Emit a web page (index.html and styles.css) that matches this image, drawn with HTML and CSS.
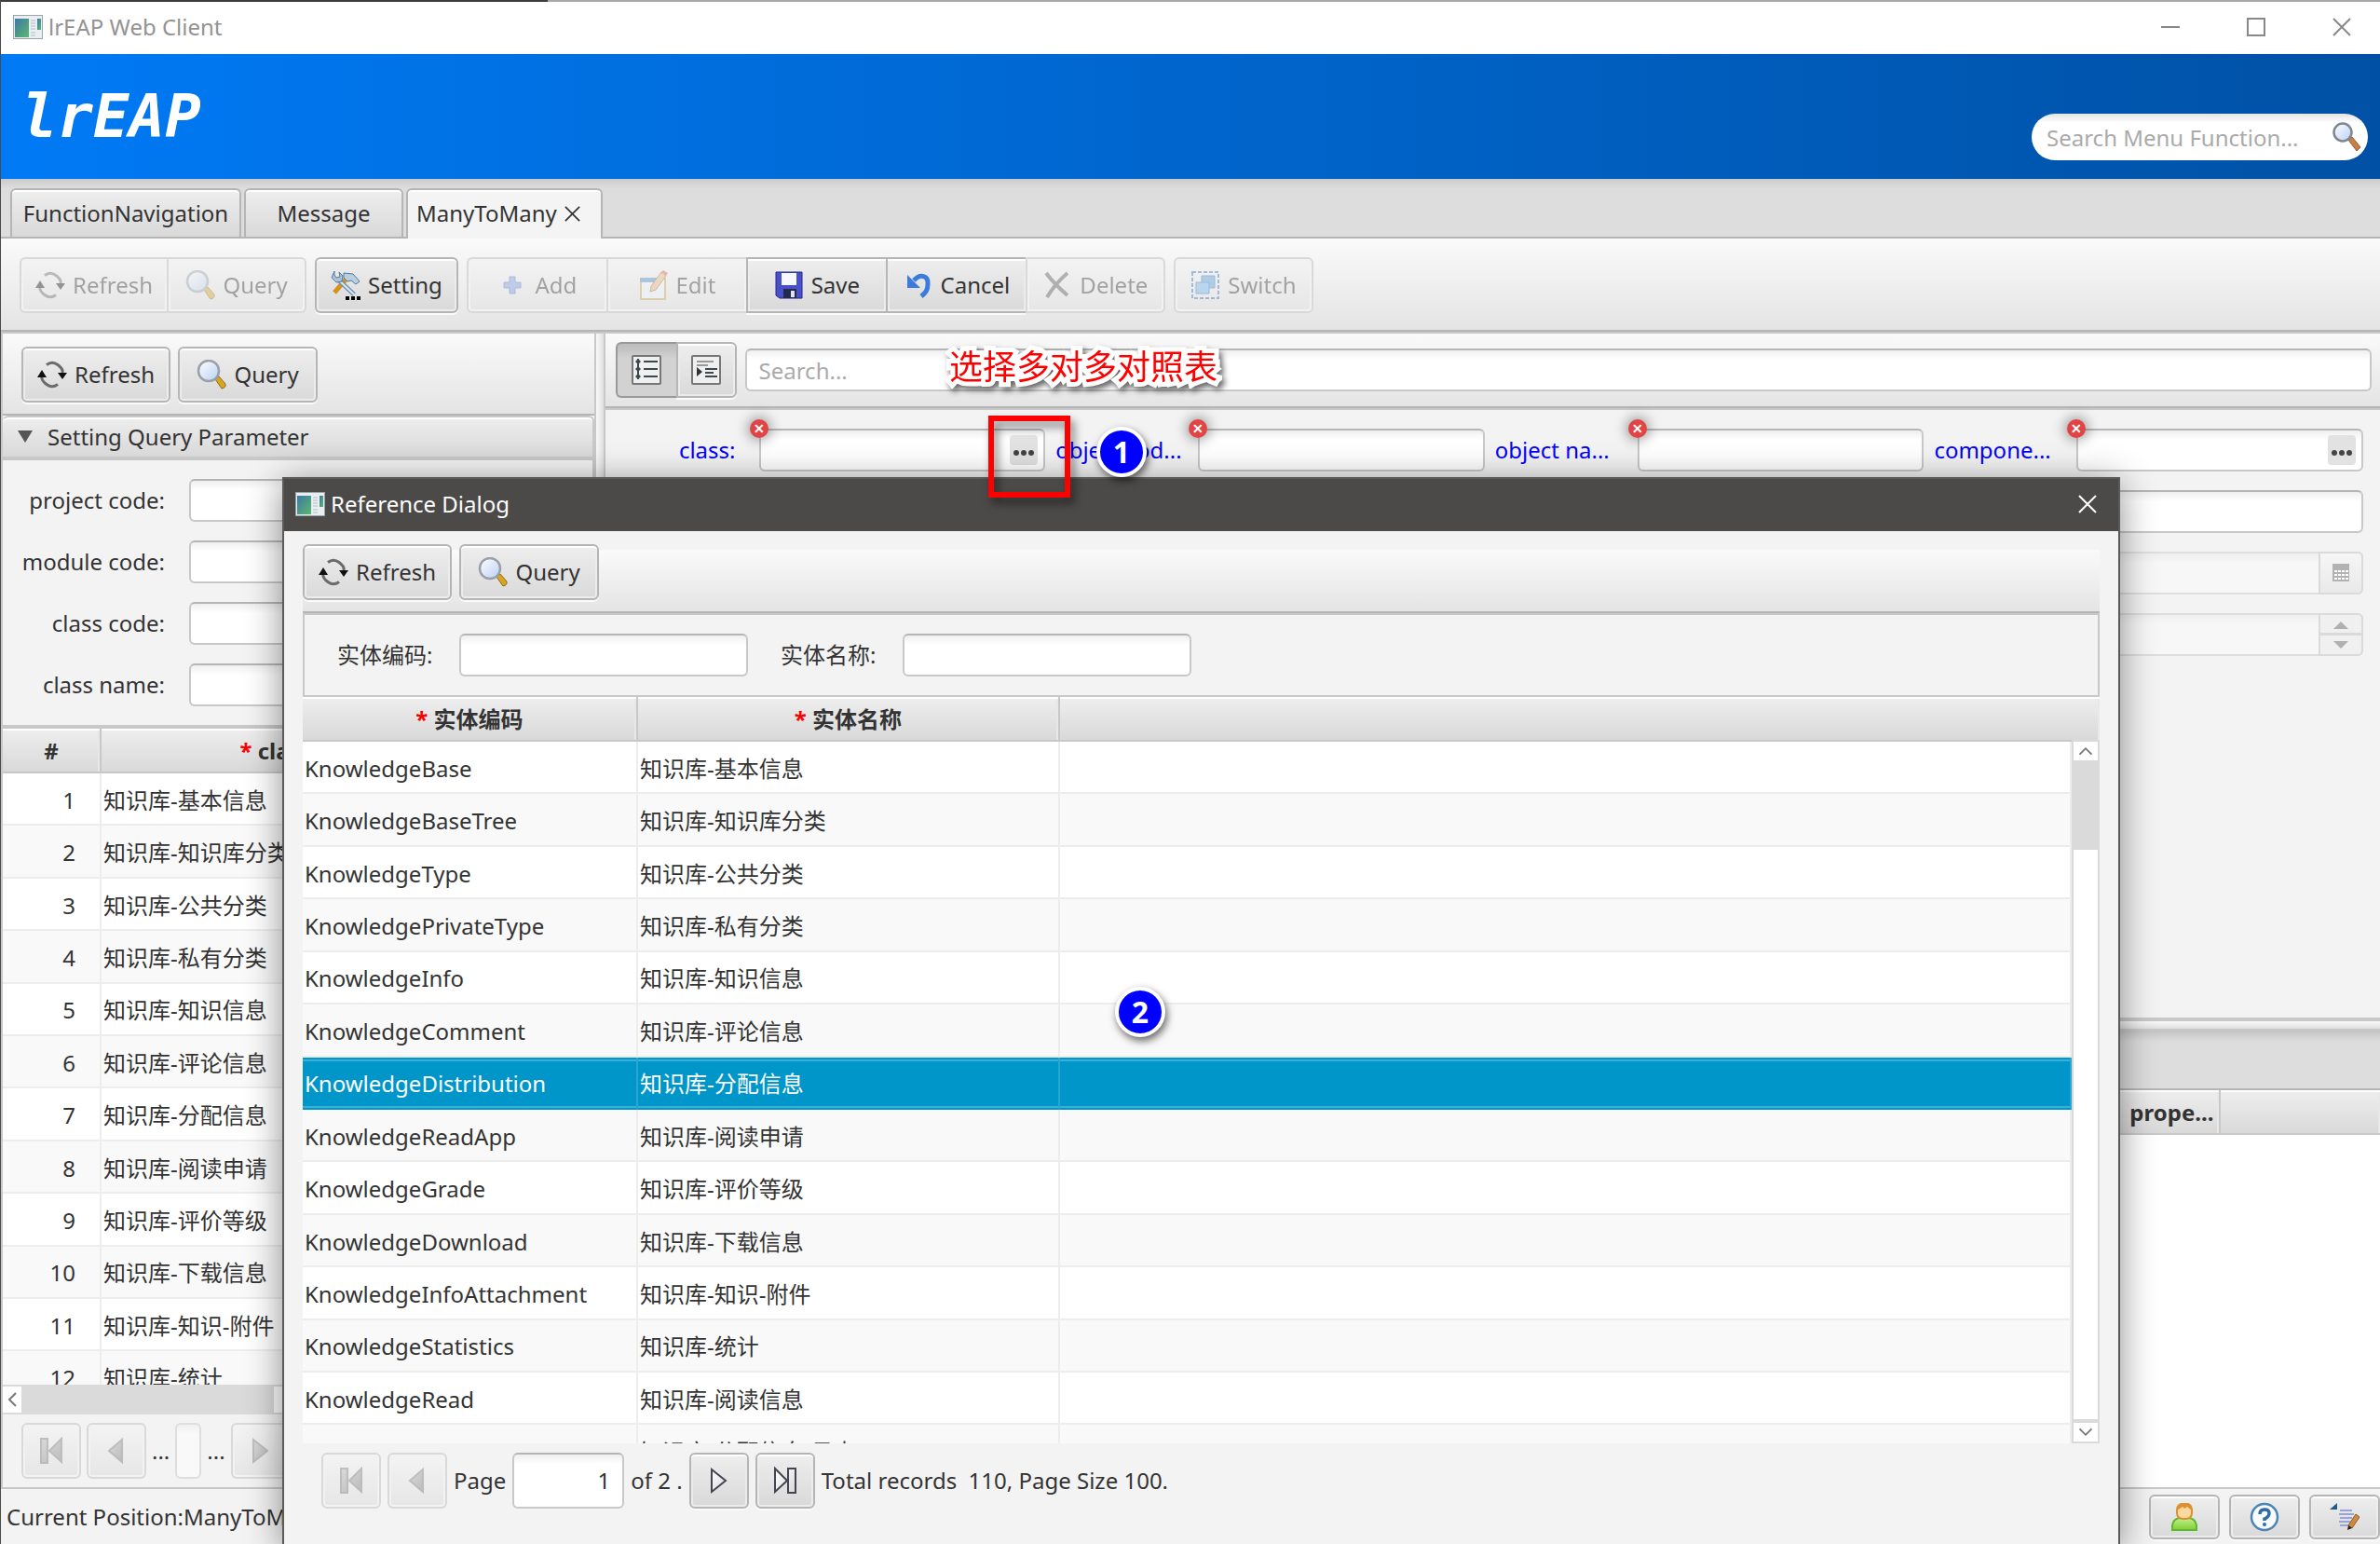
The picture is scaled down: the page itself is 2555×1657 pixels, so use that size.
FILE: index.html
```html
<!DOCTYPE html>
<html lang="en">
<head>
  <meta charset="utf-8">
  <title>lrEAP Web Client</title>
  <link rel="stylesheet" href="styles.css">
</head>
<body>
  <!-- Icon definitions -->
  <svg class="icon-defs" aria-hidden="true">
    <defs>
      <linearGradient id="lens" x1="0" y1="0" x2="1" y2="1">
        <stop offset="0" stop-color="#fff"/><stop offset="1" stop-color="#b9d0f5"/>
      </linearGradient>
      <linearGradient id="screen" x1="0" y1="0" x2="1" y2="1">
        <stop offset="0" stop-color="#3c78a8"/><stop offset="1" stop-color="#5cb86c"/>
      </linearGradient>
      <linearGradient id="grass" x1="0" y1="0" x2="0" y2="1">
        <stop offset="0" stop-color="#c5ef8f"/><stop offset="1" stop-color="#7fce34"/>
      </linearGradient>
      <linearGradient id="nav" x1="0" y1="0" x2="1" y2="1">
        <stop offset="0" stop-color="#fff"/><stop offset="1" stop-color="#d8d8d8"/>
      </linearGradient>
      <linearGradient id="nav-off" x1="0" y1="0" x2="1" y2="1">
        <stop offset="0" stop-color="#bbb"/><stop offset="1" stop-color="#777"/>
      </linearGradient>
    </defs>
    <symbol id="i-app" viewBox="0 0 32 26">
      <rect x=".5" y=".5" width="31" height="25" fill="#e9eef2" stroke="#9aa4ac"/>
      <rect x="2" y="4" width="15" height="20" fill="url(#screen)"/>
      <path d="M19 6h5M19 9h5M19 12h5M19 15h5M19 19h5M19 22h5" stroke="#b5bcc2"/>
      <rect x="26" y="4" width="4" height="12" fill="url(#screen)"/>
    </symbol>
    <symbol id="i-refresh" viewBox="0 0 32 32">
      <path d="M10 5.500Q16 1 22 5.500T27 14M22 26.500Q16 31 10 26.500T5 18" fill="none" stroke="#6b6b6b" stroke-width="3"/>
      <path d="M22 14h10l-5 7zM0 19h10l-5-8z" fill="#111"/>
    </symbol>
    <symbol id="i-query" viewBox="0 0 32 32">
      <path d="M20 21l4-3 7 8q1 4-4 5z" fill="#d9a520" stroke="#8a6d20"/>
      <circle cx="13" cy="12" r="11" fill="url(#lens)" stroke="#9a9fa8" stroke-width="2.500"/>
    </symbol>
    <symbol id="i-search" viewBox="0 0 32 32">
      <path d="M18 19l4-3 9 11-4 4z" fill="#c98040" stroke="#8c5a34"/>
      <circle cx="12" cy="11" r="9.500" fill="url(#lens)" stroke="#7f8790" stroke-width="2.500"/>
    </symbol>
    <symbol id="i-setting" viewBox="0 0 32 32">
      <path d="M4 24L17 9" stroke="#d8921c" stroke-width="5"/>
      <path d="M14 3l10 1 7 8-4 3-5-4-4 1-4-4z" fill="#b9cfe3" stroke="#56789a"/>
      <path d="M8 10l17 16" stroke="#6f91b3" stroke-width="5"/>
      <path d="M8 10l17 16" stroke="#dbe9f5" stroke-width="2"/>
      <path d="M4 1l-3 7 5 5 6-1 1-6-4-4 1 5-4 1-2-3z" fill="#a9c3dc" stroke="#56789a"/>
      <path d="M16 28h4v4h-4zM22 28h4v4h-4zM28 28h4v4h-4z"/>
    </symbol>
    <symbol id="i-add" viewBox="0 0 32 32">
      <path d="M13 7h6v6h6v6h-6v6h-6v-6H7v-6h6z" fill="#7b9ee8" stroke="#4a70c8"/>
    </symbol>
    <symbol id="i-edit" viewBox="0 0 32 32">
      <rect x="3" y="9" width="26" height="22" fill="#f2f9ff" stroke="#c8a850" stroke-width="2"/>
      <path d="M2 8h21v5H2z" fill="#4a8ac8"/>
      <path d="M14 17L25 2l5 4-11 15-6 2z" fill="#e9b878" stroke="#9c6a3c"/>
      <path d="M25 2l5 4 2-3-5-3z" fill="#e06050"/>
    </symbol>
    <symbol id="i-save" viewBox="0 0 32 32">
      <path d="M2 2h28v28H6l-4-3z" fill="#4a50c8" stroke="#23268c"/>
      <path d="M8 3h16v13H8z" fill="#f5f8ff"/>
      <path d="M10 20h14v10H10z" fill="#222a50"/>
      <path d="M18 22h4v7h-4z" fill="#e0e4f4"/>
    </symbol>
    <symbol id="i-cancel" viewBox="0 0 32 32">
      <path d="M11 11C18 3 27 6 26 15c0 6-2 9-7 13" fill="none" stroke="#3c7bdc" stroke-width="5"/>
      <path d="M4 5v14h14z" fill="#3c7bdc"/>
    </symbol>
    <symbol id="i-delete" viewBox="0 0 32 32">
      <path d="M4 3q9 12 23 24M27 3Q14 14 5 29" fill="none" stroke="#555" stroke-width="4"/>
    </symbol>
    <symbol id="i-switch" viewBox="0 0 32 32">
      <rect x="2" y="2" width="28" height="28" fill="none" stroke="#2f6fb8" stroke-width="2" stroke-dasharray="4 2"/>
      <path d="M12 6h14v13H12z" fill="#4f9be0" stroke="#2f6fb8"/>
      <path d="M6 13h14v12H6z" fill="#6fb6f0" stroke="#2f6fb8"/>
    </symbol>
    <symbol id="i-list" viewBox="0 0 32 32">
      <rect x="1" y="1" width="30" height="30" rx="1" fill="#efefef" stroke="#777" stroke-width="2"/>
      <path d="M7 4v22M13 7h15M13 15h15M13 23h15" stroke="#3d484c" stroke-width="2"/>
      <path d="M4 7l3-3 3 3-3 3zM4 15l3-3 3 3-3 3zM4 23l3-3 3 3-3 3z" fill="#3d484c"/>
    </symbol>
    <symbol id="i-tree" viewBox="0 0 32 32">
      <rect x="1" y="1" width="30" height="30" rx="1" fill="#efefef" stroke="#777" stroke-width="2"/>
      <path d="M6 7h18M6 11h12" stroke="#999" stroke-width="2"/>
      <path d="M15 15h13M15 19h9M15 23h13" stroke="#3d484c" stroke-width="2"/>
      <path d="M6 13l6 5-6 5z" fill="#333"/>
    </symbol>
    <symbol id="i-first-off" viewBox="0 0 32 32">
      <path d="M5 3h7v26H5zM27 3v25L14 16z" fill="url(#nav-off)" stroke="#777" stroke-width="2"/>
    </symbol>
    <symbol id="i-prev-off" viewBox="0 0 32 32">
      <path d="M22 4v24L8 16z" fill="url(#nav-off)" stroke="#777" stroke-width="2"/>
    </symbol>
    <symbol id="i-next-off" viewBox="0 0 32 32">
      <path d="M8 4v24l15-12z" fill="url(#nav-off)" stroke="#777" stroke-width="2"/>
    </symbol>
    <symbol id="i-next" viewBox="0 0 32 32">
      <path d="M8 4v24l15-12z" fill="url(#nav)" stroke="#444452" stroke-width="2"/>
    </symbol>
    <symbol id="i-last" viewBox="0 0 32 32">
      <path d="M5 3v25l13-12zM19 3h8v26h-8z" fill="url(#nav)" stroke="#444452" stroke-width="2"/>
    </symbol>
    <symbol id="i-user" viewBox="0 0 32 32">
      <path d="M3 30v-5q1-7 8-8h10q7 1 8 8v5z" fill="url(#grass)" stroke="#5cb82c" stroke-width="2"/>
      <rect x="8" y="2" width="16" height="16" rx="6" fill="#fbd9a0" stroke="#dc9030" stroke-width="2"/>
      <path d="M8 9V5q2-4 6-4h4q5 0 6 4v4l-5-4-3 2-2-2z" fill="#dc9030"/>
    </symbol>
    <symbol id="i-help" viewBox="0 0 32 32">
      <circle cx="16" cy="16" r="14" fill="#f8fbff" stroke="#4d84b8" stroke-width="2.500"/>
      <path d="M11 13q0-5 5-5t5 4-5 6v2" fill="none" stroke="#2f6ca8" stroke-width="3.500"/>
      <circle cx="16" cy="24" r="2" fill="#2f6ca8"/>
    </symbol>
    <symbol id="i-note" viewBox="0 0 32 32">
      <path d="M0 8l8-7v7z" fill="#1d5c8c"/>
      <path d="M11 9h13M10 13h16M11 17h13M10 21h12M11 25h10" stroke="#98a4d8" stroke-width="2"/>
      <path d="M20 25l8-12 4 3-8 12z" fill="#d08a40" stroke="#8c5a28"/>
      <path d="M20 25l4 3-5 2z" fill="#222"/>
    </symbol>
    <symbol id="i-calendar" viewBox="0 0 18 20">
      <path d="M0 0h18v19H0z" fill="#b2b2b2"/>
      <path d="M2 8h15M2 12h15M2 16h15" stroke="#fff" stroke-width="2" stroke-dasharray="3 1"/>
    </symbol>
    <symbol id="i-close" viewBox="0 0 20 20">
      <path d="M1 1l18 18M19 1L1 19" stroke="currentColor" stroke-width="2"/>
    </symbol>
    <symbol id="i-dots" viewBox="0 0 24 8">
      <circle cx="4" cy="4" r="3"/><circle cx="12" cy="4" r="3"/><circle cx="20" cy="4" r="3"/>
    </symbol>
  </svg>

  <!-- Title bar -->
  <div class="titlebar">
    <svg class="app-icon"><use href="#i-app"/></svg>
    <span>lrEAP Web Client</span>
    <div class="window-controls">
      <svg viewBox="0 0 20 20"><path d="M0 10h20" stroke="#888" stroke-width="2"/></svg>
      <svg viewBox="0 0 20 20"><path d="M1 1h18v18H1z" fill="none" stroke="#888" stroke-width="2"/></svg>
      <svg><use href="#i-close"/></svg>
    </div>
  </div>

  <!-- Banner -->
  <header class="banner">
    <div class="logo">lrEAP</div>
    <div class="menu-search">
      <input type="text" placeholder="Search Menu Function..." aria-label="Search Menu Function">
      <svg><use href="#i-search"/></svg>
    </div>
  </header>

  <nav class="tabs">
    <button class="tab tab-nav">FunctionNavigation</button>
    <button class="tab tab-message">Message</button>
    <button class="tab active"><span>ManyToMany</span><svg><use href="#i-close"/></svg></button>
  </nav>

  <!-- Main toolbar -->
  <div class="toolbar main-toolbar">
    <div class="group">
      <button class="btn" disabled><svg><use href="#i-refresh"/></svg><span>Refresh</span></button>
      <button class="btn" disabled><svg><use href="#i-query"/></svg><span>Query</span></button>
    </div>
    <button class="btn"><svg><use href="#i-setting"/></svg><span>Setting</span></button>
    <div class="group">
      <button class="btn" disabled><svg><use href="#i-add"/></svg><span>Add</span></button>
      <button class="btn" disabled><svg><use href="#i-edit"/></svg><span>Edit</span></button>
      <button class="btn"><svg><use href="#i-save"/></svg><span>Save</span></button>
      <button class="btn"><svg><use href="#i-cancel"/></svg><span>Cancel</span></button>
      <button class="btn" disabled><svg><use href="#i-delete"/></svg><span>Delete</span></button>
    </div>
    <button class="btn" disabled><svg><use href="#i-switch"/></svg><span>Switch</span></button>
  </div>

  <main class="workspace">
    <!-- Left pane -->
    <section class="left-pane">
      <div class="toolbar query-toolbar">
        <button class="btn"><svg><use href="#i-refresh"/></svg><span>Refresh</span></button>
        <button class="btn"><svg><use href="#i-query"/></svg><span>Query</span></button>
      </div>
      <div class="pane-title">Setting Query Parameter</div>
      <form class="query-form">
        <label for="project-code">project code:</label><input type="text" id="project-code">
        <label for="module-code">module code:</label><input type="text" id="module-code">
        <label for="class-code">class code:</label><input type="text" id="class-code">
        <label for="class-name">class name:</label><input type="text" id="class-name">
      </form>
      <div class="table-wrap">
        <table class="data-table class-table">
          <thead>
            <tr><th class="col-no">#</th><th class="col-name"><i>*</i> class name</th><th></th></tr>
          </thead>
          <tbody>
            <tr><td>1</td><td>知识库-基本信息</td><td></td></tr>
            <tr><td>2</td><td>知识库-知识库分类</td><td></td></tr>
            <tr><td>3</td><td>知识库-公共分类</td><td></td></tr>
            <tr><td>4</td><td>知识库-私有分类</td><td></td></tr>
            <tr><td>5</td><td>知识库-知识信息</td><td></td></tr>
            <tr><td>6</td><td>知识库-评论信息</td><td></td></tr>
            <tr><td>7</td><td>知识库-分配信息</td><td></td></tr>
            <tr><td>8</td><td>知识库-阅读申请</td><td></td></tr>
            <tr><td>9</td><td>知识库-评价等级</td><td></td></tr>
            <tr><td>10</td><td>知识库-下载信息</td><td></td></tr>
            <tr><td>11</td><td>知识库-知识-附件</td><td></td></tr>
            <tr><td>12</td><td>知识库-统计</td><td></td></tr>
          </tbody>
        </table>
      </div>
      <div class="hscroll">
        <svg viewBox="0 0 20 28"><path d="M14 7l-7 7 7 7" fill="none" stroke="#777" stroke-width="2"/></svg>
        <div class="hthumb"></div>
      </div>
      <div class="pager left-pager">
        <button class="btn nav-btn" disabled aria-label="First"><svg><use href="#i-first-off"/></svg></button>
        <button class="btn nav-btn" disabled aria-label="Previous"><svg><use href="#i-prev-off"/></svg></button>
        <span>...</span>
        <input type="text" class="page-mini" disabled aria-label="Page">
        <span>...</span>
        <button class="btn nav-btn" disabled aria-label="Next"><svg><use href="#i-next-off"/></svg></button>
      </div>
    </section>

    <div class="vsplit"></div>

    <!-- Right pane -->
    <section class="right-pane">
      <div class="detail">
        <div class="toolbar search-toolbar">
          <div class="group">
            <button class="btn view-btn pressed" aria-label="List"><svg><use href="#i-list"/></svg></button>
            <button class="btn view-btn" aria-label="Tree"><svg><use href="#i-tree"/></svg></button>
          </div>
          <input type="text" placeholder="Search..." aria-label="Search">
        </div>
        <form class="detail-form">
          <div class="field">
            <label for="f-class">class:</label>
            <div class="box error"><input type="text" id="f-class"><button type="button" class="pick" aria-label="Choose class"><svg><use href="#i-dots"/></svg></button></div>
          </div>
          <div class="field clipped">
            <label for="f-code">object cod...</label>
            <div class="box error"><input type="text" id="f-code"></div>
          </div>
          <div class="field clipped">
            <label for="f-name">object na...</label>
            <div class="box error"><input type="text" id="f-name"></div>
          </div>
          <div class="field clipped">
            <label for="f-component">compone...</label>
            <div class="box error"><input type="text" id="f-component"><button type="button" class="pick" aria-label="Choose component"><svg><use href="#i-dots"/></svg></button></div>
          </div>
          <div class="field last-col">
            <div class="box"><input type="text" aria-label="Remark"></div>
          </div>
          <div class="field last-col off">
            <div class="box"><input type="text" disabled aria-label="Date"><span class="side"><svg class="calendar"><use href="#i-calendar"/></svg></span></div>
          </div>
          <div class="field last-col off">
            <div class="box"><input type="text" disabled aria-label="Sequence"><span class="side spin"><b class="up"></b><b class="down"></b></span></div>
          </div>
        </form>
      </div>
      <div class="hsplit"></div>
      <div class="property">
        <div class="property-tabs"></div>
        <table class="data-table property-table">
          <thead><tr><th>prope...</th><th></th></tr></thead>
        </table>
      </div>
    </section>
  </main>

  <footer class="statusbar">
    <span>Current Position:ManyToMany</span>
    <div class="status-buttons">
      <button class="btn status-btn" aria-label="User"><svg><use href="#i-user"/></svg></button>
      <button class="btn status-btn" aria-label="Help"><svg><use href="#i-help"/></svg></button>
      <button class="btn status-btn" aria-label="Note"><svg><use href="#i-note"/></svg></button>
    </div>
  </footer>

  <!-- Reference dialog -->
  <div class="dialog">
    <div class="dialog-title">
      <svg class="app-icon"><use href="#i-app"/></svg>
      <span>Reference Dialog</span>
      <svg class="dialog-close"><use href="#i-close"/></svg>
    </div>
    <div class="dialog-body">
      <div class="dialog-toolbar">
        <button class="btn"><svg><use href="#i-refresh"/></svg><span>Refresh</span></button>
        <button class="btn"><svg><use href="#i-query"/></svg><span>Query</span></button>
      </div>
      <form class="dialog-form">
        <label for="entity-code">实体编码:</label><input type="text" id="entity-code">
        <label for="entity-name">实体名称:</label><input type="text" id="entity-name">
      </form>
      <div class="table-wrap">
        <table class="data-table entity-table">
          <colgroup>
            <col class="col-code"><col class="col-entity"><col><col class="col-scroll">
          </colgroup>
          <thead>
            <tr><th><i>*</i> 实体编码</th><th><i>*</i> 实体名称</th><th colspan="2"></th></tr>
          </thead>
          <tbody>
            <tr><td>KnowledgeBase</td><td>知识库-基本信息</td><td></td><td></td></tr>
            <tr><td>KnowledgeBaseTree</td><td>知识库-知识库分类</td><td></td><td></td></tr>
            <tr><td>KnowledgeType</td><td>知识库-公共分类</td><td></td><td></td></tr>
            <tr><td>KnowledgePrivateType</td><td>知识库-私有分类</td><td></td><td></td></tr>
            <tr><td>KnowledgeInfo</td><td>知识库-知识信息</td><td></td><td></td></tr>
            <tr><td>KnowledgeComment</td><td>知识库-评论信息</td><td></td><td></td></tr>
            <tr class="selected"><td>KnowledgeDistribution</td><td>知识库-分配信息</td><td></td><td></td></tr>
            <tr><td>KnowledgeReadApp</td><td>知识库-阅读申请</td><td></td><td></td></tr>
            <tr><td>KnowledgeGrade</td><td>知识库-评价等级</td><td></td><td></td></tr>
            <tr><td>KnowledgeDownload</td><td>知识库-下载信息</td><td></td><td></td></tr>
            <tr><td>KnowledgeInfoAttachment</td><td>知识库-知识-附件</td><td></td><td></td></tr>
            <tr><td>KnowledgeStatistics</td><td>知识库-统计</td><td></td><td></td></tr>
            <tr><td>KnowledgeRead</td><td>知识库-阅读信息</td><td></td><td></td></tr>
            <tr><td>KnowledgeLog</td><td>知识库-分配信息-日志</td><td></td><td></td></tr>
          </tbody>
        </table>
        <div class="vscroll">
          <svg viewBox="0 0 28 20"><path d="M7 14l7-7 7 7" fill="none" stroke="#777" stroke-width="2"/></svg>
          <div class="vthumb"></div>
          <svg class="scroll-down" viewBox="0 0 28 20"><path d="M7 6l7 7 7-7" fill="none" stroke="#777" stroke-width="2"/></svg>
        </div>
      </div>
      <div class="pager">
        <button class="btn nav-btn" disabled aria-label="First"><svg><use href="#i-first-off"/></svg></button>
        <button class="btn nav-btn" disabled aria-label="Previous"><svg><use href="#i-prev-off"/></svg></button>
        <label for="page-no">Page</label>
        <input type="text" class="page-no" id="page-no" value="1">
        <span>of 2 .</span>
        <button class="btn nav-btn" aria-label="Next"><svg><use href="#i-next"/></svg></button>
        <button class="btn nav-btn" aria-label="Last"><svg><use href="#i-last"/></svg></button>
        <span class="total">Total records  110, Page Size 100.</span>
      </div>
    </div>
  </div>

  <!-- Tutorial marks -->
  <div class="note">选择多对多对照表</div>
  <div class="highlight"></div>
  <div class="step step-1">1</div>
  <div class="step step-2">2</div>
</body>
</html>
```
FILE: styles.css
```css
* {
  box-sizing: border-box;
}

body {
  margin: 0;
  height: 100vh;
  display: flex;
  flex-direction: column;
  position: relative;
  overflow: hidden;
  border-left: 1px solid #4a4a4a;
  background-color: #f3f3f3;
  color: #333;
  font-family: "Noto Sans", "Noto Sans CJK SC", sans-serif;
  font-size: 24px;
  line-height: 32px;
}

button,
input {
  font: inherit;
  color: inherit;
}

form {
  margin: 0;
}

.icon-defs {
  position: absolute;
  width: 0;
  height: 0;
}

/* Title bar */
.titlebar {
  height: 58px;
  display: flex;
  align-items: center;
  padding: 0 31px 0 13px;
  gap: 6px;
  background: linear-gradient(to right, #3c3c3c 587px, #a8a8a8 587px) top / 100% 2px no-repeat #fff;
  color: #939393;
}

.app-icon {
  width: 32px;
  height: 26px;
}

.window-controls {
  margin-left: auto;
  display: flex;
  gap: 72px;
  color: #888;
}

.window-controls svg {
  width: 20px;
  height: 20px;
}

/* Banner */
.banner {
  height: 134px;
  display: flex;
  align-items: center;
  justify-content: space-between;
  padding: 0 13px 0 22px;
  background: linear-gradient(to right, #007af5, #0051a5);
}

.logo {
  color: #fff;
  font-family: "DejaVu Sans Mono", monospace;
  font-size: 64px;
  font-style: italic;
  font-weight: bold;
}

.menu-search {
  display: flex;
  align-items: center;
  width: 361px;
  height: 50px;
  margin-top: 44px;
  padding: 0 7px 0 16px;
  border-radius: 25px;
  background: linear-gradient(#e4e4e4, #fff 10px);
}

.menu-search input {
  flex: 1;
  min-width: 0;
}

.menu-search svg {
  width: 32px;
  height: 32px;
}

input::placeholder {
  color: #aaa;
  opacity: 1;
}

/* Tabs */
.tabs {
  height: 64px;
  display: flex;
  align-items: flex-end;
  gap: 3px;
  padding-left: 10px;
  border-bottom: 2px solid #b5b5b5;
  background: linear-gradient(#cacaca, #ddd 10px);
}

.tab {
  height: 52px;
  padding: 0 9px;
  border: 2px solid #b5b5b5;
  border-bottom: none;
  border-radius: 6px 6px 0 0;
  background: linear-gradient(#eee, #d9d9d9);
  box-shadow: inset 0 2px #fff;
}

.tab-nav {
  width: 248px;
}

.tab-message {
  width: 171px;
}

.tab.active {
  display: flex;
  align-items: center;
  gap: 8px;
  width: 211px;
  height: 54px;
  margin-bottom: -2px;
  padding-bottom: 2px;
  background: #f4f4f4;
}

.tab svg {
  width: 17px;
  height: 17px;
}

/* Buttons */
.toolbar {
  display: flex;
  align-items: center;
  border-bottom: 2px solid #b5b5b5;
  background: linear-gradient(#fafafa, #e4e4e4);
}

.main-toolbar {
  height: 100px;
  flex-shrink: 0;
  gap: 9px;
  padding: 2px 0 0 20px;
}

.group {
  display: flex;
}

.btn {
  display: inline-flex;
  align-items: center;
  justify-content: center;
  gap: 8px;
  min-width: 150px;
  height: 60px;
  padding: 0 15px;
  border: 2px solid #b5b5b5;
  border-radius: 6px;
  background: linear-gradient(#eee, #d9d9d9);
  box-shadow: inset 0 2px #fff, inset 0 0 0 2px #ececec, 0 2px #fafafa;
}

.btn svg {
  width: 32px;
  height: 32px;
  flex-shrink: 0;
}

.btn:disabled {
  border-color: #d9d9d9;
  background: linear-gradient(#f3f3f3, #e6e6e6);
  box-shadow: inset 0 0 0 2px #f2f2f2;
}

.btn:disabled > * {
  opacity: 0.4;
}

.group .btn {
  border-right-width: 0;
  border-radius: 0;
}

.group .btn:first-child {
  border-radius: 6px 0 0 6px;
}

.group .btn:last-child {
  border-right-width: 2px;
  border-radius: 0 6px 6px 0;
}

/* Workspace */
.workspace {
  flex: 1;
  min-height: 0;
  display: flex;
  border-top: 2px solid #c8c8c8;
  border-bottom: 2px solid #c8c8c8;
}

input[type="text"] {
  height: 46px;
  border: 2px solid #c8c8c8;
  border-top-color: #b5b5b5;
  border-radius: 6px;
  background: linear-gradient(#efefef, #fff 10px);
  padding: 0 13px;
  outline: none;
}

.menu-search input[type="text"] {
  padding: 0;
  border: none;
  background: none;
}

.left-pane {
  width: 25%;
  min-width: 0;
  display: flex;
  flex-direction: column;
  border-left: 2px solid #c8c8c8;
  border-right: 2px solid #c8c8c8;
}

.query-toolbar {
  height: 88px;
  flex-shrink: 0;
  gap: 8px;
  padding: 1px 0 0 20px;
}

.pane-title {
  height: 46px;
  flex-shrink: 0;
  padding-left: 14px;
  line-height: 42px;
  border: 2px solid #c8c8c8;
  border-left: none;
  border-radius: 6px 6px 0 0;
  background: linear-gradient(#eee, #d9d9d9);
  box-shadow: inset 0 2px #fff;
}

.pane-title::before {
  content: "";
  display: inline-block;
  margin: 0 16px 3px 2px;
  border: 8px solid transparent;
  border-top: 13px solid #555;
  border-bottom: none;
}

.query-form {
  display: grid;
  grid-template-columns: 170px 1fr;
  row-gap: 20px;
  align-items: center;
  padding: 20px 20px 20px 4px;
  border: 2px solid #c8c8c8;
  border-bottom-width: 4px;
  border-left: none;
}

.query-form label {
  text-align: right;
}

.query-form input {
  width: 100%;
  margin-left: 26px;
}

.table-wrap {
  flex: 1;
  min-height: 0;
  position: relative;
  overflow: hidden;
}

/* Tables */
.data-table {
  width: 100%;
  border-collapse: separate;
  border-spacing: 0;
  table-layout: fixed;
}

.data-table th {
  height: 48px;
  padding: 2px 0 0;
  border-right: 2px solid #c8c8c8;
  border-bottom: 2px solid #c8c8c8;
  background: linear-gradient(#eee, #d9d9d9);
  box-shadow: inset 0 2px #fff, inset -2px 0 #e8e8e8;
}

.data-table th:last-child {
  border-right: none;
}

.data-table th i {
  color: #f00;
  font-style: normal;
}

.data-table td {
  padding: 3px 2px 0;
  border-right: 2px solid #ededed;
  border-bottom: 2px solid #ededed;
  background-color: #fff;
  white-space: nowrap;
}

.data-table tr:nth-child(even) td {
  background-color: #f9f9f9;
}

.class-table {
  height: 725px;
}

.class-table td:first-child {
  text-align: right;
  padding-right: 26px;
}

.col-no {
  width: 106px;
}

.col-name {
  width: 450px;
}

.hscroll {
  height: 32px;
  flex-shrink: 0;
  display: flex;
  border: 2px solid #dadada;
  border-left: none;
  background-color: #fff;
}

.hscroll svg {
  width: 20px;
  height: 28px;
}

.hthumb {
  width: 271px;
  background-color: #dadada;
}

.pager {
  display: flex;
  align-items: center;
  gap: 7px;
}

.left-pager {
  height: 78px;
  flex-shrink: 0;
  gap: 6px;
  padding-left: 20px;
}

.left-pager > * {
  flex-shrink: 0;
}

.nav-btn {
  min-width: 64px;
  padding: 0;
}

.pager input[type="text"] {
  height: 60px;
}

.pager .page-mini {
  width: 28px;
  padding: 0;
  border-color: #dedede;
  background: linear-gradient(#f0f0f0, #f9f9f9 10px);
}

.pager .page-no {
  width: 120px;
  text-align: right;
}

.total {
  white-space: pre;
}

.vsplit {
  width: 8px;
  background: linear-gradient(to right, #fafafa, #e0e0e0);
}

.hsplit {
  height: 10px;
  flex-shrink: 0;
  background: linear-gradient(#fafafa, #e0e0e0);
  border-bottom: 2px solid #c8c8c8;
}

/* Right pane */
.right-pane {
  flex: 1;
  min-width: 0;
  display: flex;
  flex-direction: column;
}

.detail {
  flex: 3 1 0;
  border-left: 2px solid #c8c8c8;
  border-bottom: 4px solid #c8c8c8;
}

.search-toolbar {
  height: 80px;
  gap: 9px;
  padding: 0 9px 0 11px;
}

.search-toolbar input {
  flex: 1;
}

.view-btn {
  min-width: 65px;
  padding: 0;
}

.pressed {
  border-color: #999;
  background: linear-gradient(#bbb, #d2d2d2 16px);
  box-shadow: none;
}

.detail-form {
  display: grid;
  grid-template-columns: repeat(4, 1fr);
  gap: 20px 11px;
  padding: 20px 18px 20px 12px;
  border-top: 2px solid #c8c8c8;
}

.field {
  display: flex;
  align-items: center;
  color: #00f;
}

.field label {
  width: 153px;
  padding-right: 25px;
  text-align: right;
  white-space: nowrap;
}

.clipped label {
  padding-right: 0;
  text-align: left;
}

.last-col {
  grid-column: 4;
  padding-left: 153px;
}

.box {
  flex: 1;
  min-width: 0;
  position: relative;
  display: flex;
}

.box input {
  width: 100%;
}

.error::before {
  content: "✕";
  position: absolute;
  left: -10px;
  top: -10px;
  width: 20px;
  height: 20px;
  border-radius: 50%;
  background-color: #e04444;
  box-shadow: 0 0 14px 2px rgba(0, 0, 0, 0.4);
  color: #fff;
  font-size: 14px;
  font-weight: bold;
  line-height: 20px;
  text-align: center;
}

.pick {
  position: absolute;
  right: 8px;
  top: 7px;
  width: 30px;
  height: 32px;
  display: flex;
  align-items: center;
  justify-content: center;
  padding: 6px 0 0;
  border: none;
  border-radius: 4px;
  background-color: #e2e2e2;
}

.pick svg {
  width: 24px;
  height: 8px;
  fill: #444;
}

.off .box input {
  border-color: #dedede;
  background: linear-gradient(#efefef, #f7f7f7 10px);
}

.side {
  position: absolute;
  right: 0;
  top: 0;
  width: 48px;
  height: 46px;
  display: flex;
  align-items: center;
  justify-content: center;
  border: 2px solid #dadada;
  border-radius: 0 6px 6px 0;
  background: linear-gradient(#f6f6f6, #e9e9e9);
}

.calendar {
  width: 18px;
  height: 20px;
}

.spin {
  flex-direction: column;
  justify-content: space-around;
  background: linear-gradient(#f0f0f0 19px, #dadada 19px, #dadada 22px, #f0f0f0 22px);
}

.up,
.down {
  border: 8px solid transparent;
}

.up {
  border-top: none;
  border-bottom: 8px solid #b0b0b0;
}

.down {
  border-bottom: none;
  border-top: 8px solid #b0b0b0;
}

.property {
  flex: 2 1 0;
  border-left: 2px solid #c8c8c8;
  background-color: #fff;
}

.property-tabs {
  height: 64px;
  border-bottom: 2px solid #b5b5b5;
  background: linear-gradient(#c4c4c4, #ddd 12px);
}

.property-table th:first-child {
  width: 91%;
  padding-right: 5px;
  text-align: right;
}

/* Status bar */
.statusbar {
  height: 59px;
  flex-shrink: 0;
  display: flex;
  align-items: center;
  justify-content: space-between;
  padding-left: 6px;
}

.status-buttons {
  display: flex;
  gap: 10px;
}

.status-btn {
  min-width: 76px;
  height: 48px;
  padding: 0;
}

/* Dialog */
.dialog {
  position: absolute;
  left: 302px;
  top: 512px;
  width: 1973px;
  bottom: 0;
  display: flex;
  flex-direction: column;
  border: 2px solid #5a5a58;
  border-bottom: none;
  background-color: #f3f3f3;
  box-shadow: 0 6px 36px rgba(0, 0, 0, 0.45);
}

.dialog-title {
  height: 56px;
  display: flex;
  align-items: center;
  gap: 6px;
  padding: 0 23px 2px 12px;
  background-color: #4c4a48;
  color: #fff;
}

.dialog-close {
  width: 20px;
  height: 20px;
  margin-left: auto;
}

.dialog-body {
  flex: 1;
  min-height: 0;
  display: flex;
  flex-direction: column;
  padding: 0 20px 38px;
}

.dialog-toolbar {
  height: 88px;
  flex-shrink: 0;
  display: flex;
  align-items: center;
  gap: 8px;
  padding-top: 2px;
  border-bottom: 2px solid #b5b5b5;
  background: linear-gradient(#f3f3f3 20px, #fafafa 20px, #e4e4e4);
}

.dialog-form {
  height: 90px;
  flex-shrink: 0;
  display: flex;
  align-items: center;
  padding-left: 35px;
  border: 2px solid #c8c8c8;
}

.dialog-form label {
  width: 131px;
}

.dialog-form input {
  width: 310px;
  margin-right: 35px;
}

.entity-table {
  height: 838px;
}

.col-code {
  width: 360px;
}

.col-entity {
  width: 453px;
}

.col-scroll {
  width: 30px;
}

.data-table .selected td {
  border-bottom-color: #0096c9;
  border-right-color: #2aa5d0;
  background-color: #0096c9;
  box-shadow: inset 0 2px #0096c9, inset 0 4px #3ab0d8, inset 0 -2px #3ab0d8;
  color: #fff;
}

.vscroll {
  position: absolute;
  right: 0;
  top: 46px;
  bottom: 0;
  width: 30px;
  display: flex;
  flex-direction: column;
  border: 2px solid #dadada;
  background-color: #fff;
}

.vscroll svg {
  width: 26px;
  height: 20px;
}

.vthumb {
  height: 96px;
  background-color: #dadada;
}

.vscroll .scroll-down {
  height: 24px;
  margin-top: auto;
  border-top: 4px solid #dadada;
}

.dialog .pager {
  height: 70px;
  flex-shrink: 0;
  padding: 9px 0 0 20px;
}

/* Tutorial marks */
.note {
  position: absolute;
  left: 1018px;
  top: 369px;
  color: #f00;
  font-family: "Noto Sans CJK SC", sans-serif;
  font-size: 36px;
  line-height: 44px;
  -webkit-text-stroke: 10px #fff;
  paint-order: stroke fill;
  filter: drop-shadow(3px 4px 3px rgba(0, 0, 0, 0.6));
}

.highlight {
  position: absolute;
  left: 1060px;
  top: 446px;
  width: 88px;
  height: 88px;
  border: 6px solid #f00;
  filter: drop-shadow(4px 6px 5px rgba(0, 0, 0, 0.5));
}

.step {
  position: absolute;
  width: 54px;
  height: 54px;
  border: 4px solid #fff;
  border-radius: 50%;
  background-color: #00f;
  box-shadow: 2px 4px 8px rgba(0, 0, 0, 0.6);
  color: #fff;
  font-size: 32px;
  font-weight: bold;
  line-height: 46px;
  text-align: center;
}

.step-1 {
  left: 1176px;
  top: 458px;
}

.step-2 {
  left: 1196px;
  top: 1059px;
}
```
